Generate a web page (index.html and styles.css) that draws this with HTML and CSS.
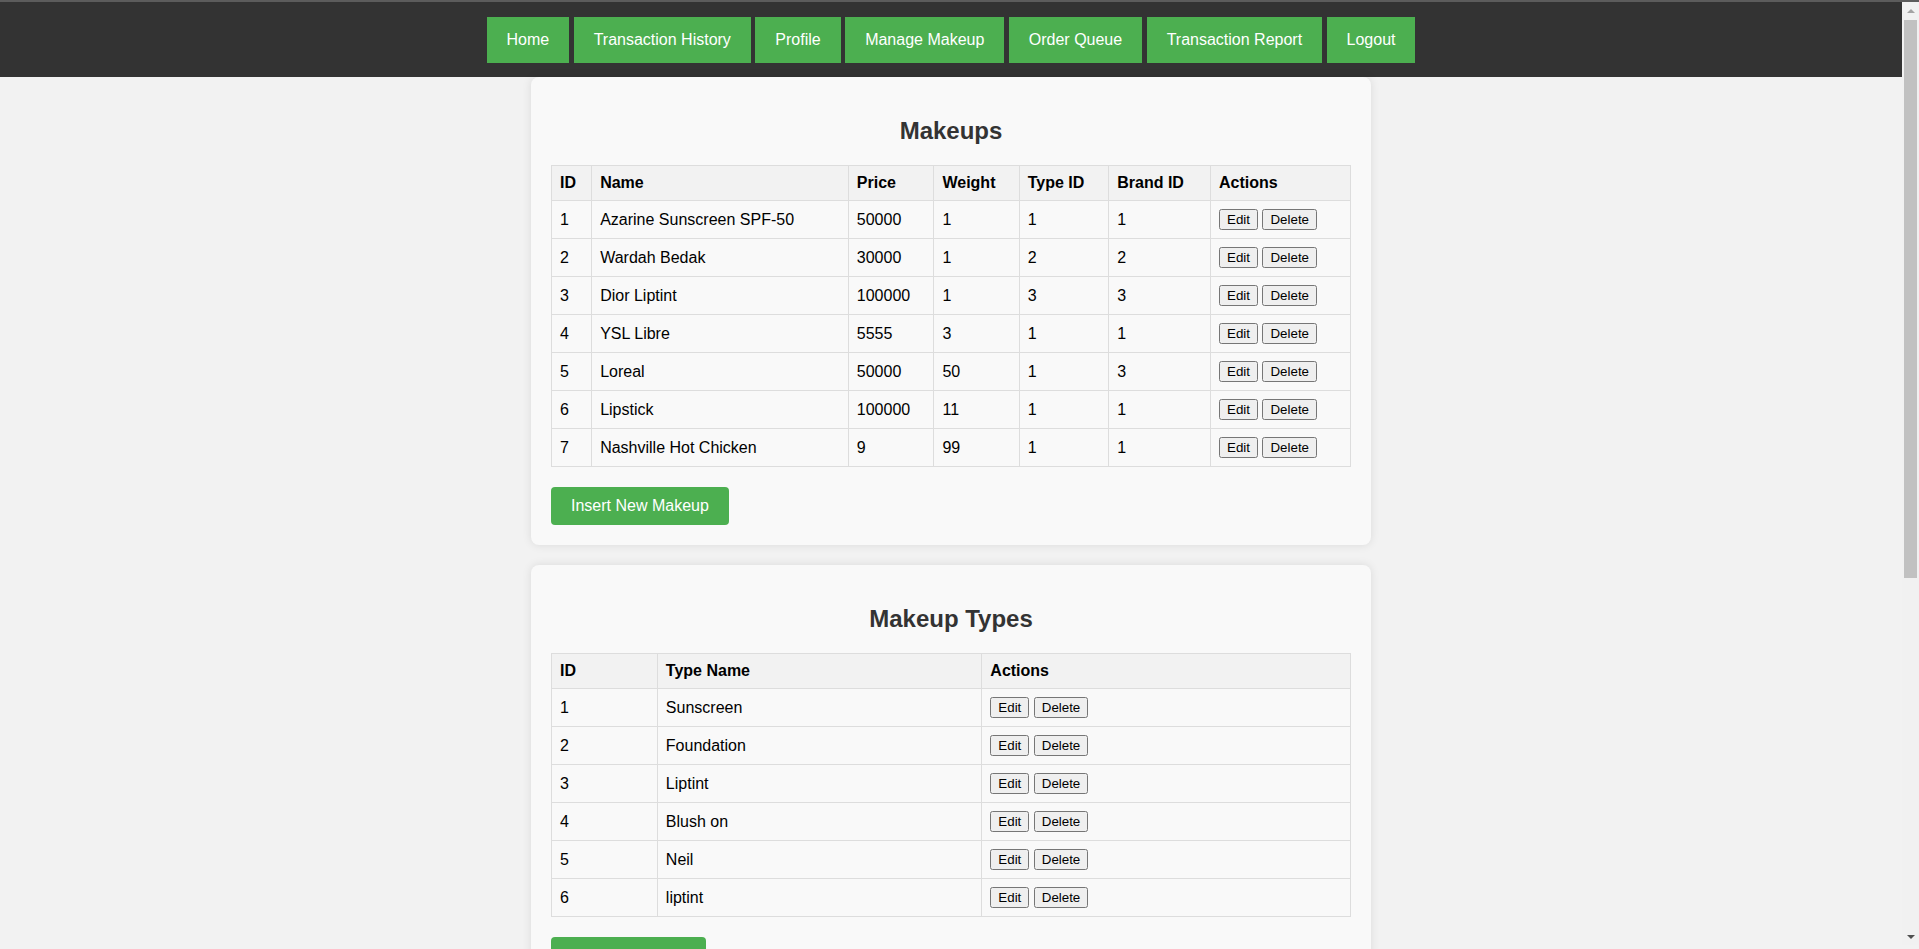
FILE: index.html
```html
<!DOCTYPE html>
<html lang="en">
<head>
<meta charset="UTF-8">
<title>Manage Makeup</title>
<link rel="stylesheet" href="styles.css">
</head>
<body>
<div class="page">
  <nav class="navbar">
    <a href="#" class="nav-link">Home</a>
    <a href="#" class="nav-link">Transaction History</a>
    <a href="#" class="nav-link">Profile</a>
    <a href="#" class="nav-link">Manage Makeup</a>
    <a href="#" class="nav-link">Order Queue</a>
    <a href="#" class="nav-link">Transaction Report</a>
    <a href="#" class="nav-link">Logout</a>
  </nav>

  <main class="content">
    <section class="card">
      <h2 class="card-title">Makeups</h2>
      <table class="data-table">
        <thead>
          <tr><th>ID</th><th>Name</th><th>Price</th><th>Weight</th><th>Type ID</th><th>Brand ID</th><th>Actions</th></tr>
        </thead>
        <tbody>
          <tr><td>1</td><td>Azarine Sunscreen SPF-50</td><td>50000</td><td>1</td><td>1</td><td>1</td><td><button class="btn-sm">Edit</button> <button class="btn-sm">Delete</button></td></tr>
          <tr><td>2</td><td>Wardah Bedak</td><td>30000</td><td>1</td><td>2</td><td>2</td><td><button class="btn-sm">Edit</button> <button class="btn-sm">Delete</button></td></tr>
          <tr><td>3</td><td>Dior Liptint</td><td>100000</td><td>1</td><td>3</td><td>3</td><td><button class="btn-sm">Edit</button> <button class="btn-sm">Delete</button></td></tr>
          <tr><td>4</td><td>YSL Libre</td><td>5555</td><td>3</td><td>1</td><td>1</td><td><button class="btn-sm">Edit</button> <button class="btn-sm">Delete</button></td></tr>
          <tr><td>5</td><td>Loreal</td><td>50000</td><td>50</td><td>1</td><td>3</td><td><button class="btn-sm">Edit</button> <button class="btn-sm">Delete</button></td></tr>
          <tr><td>6</td><td>Lipstick</td><td>100000</td><td>11</td><td>1</td><td>1</td><td><button class="btn-sm">Edit</button> <button class="btn-sm">Delete</button></td></tr>
          <tr><td>7</td><td>Nashville Hot Chicken</td><td>9</td><td>99</td><td>1</td><td>1</td><td><button class="btn-sm">Edit</button> <button class="btn-sm">Delete</button></td></tr>
        </tbody>
      </table>
      <a href="#" class="btn-insert">Insert New Makeup</a>
    </section>

    <section class="card">
      <h2 class="card-title">Makeup Types</h2>
      <table class="data-table">
        <thead>
          <tr><th>ID</th><th>Type Name</th><th>Actions</th></tr>
        </thead>
        <tbody>
          <tr><td>1</td><td>Sunscreen</td><td><button class="btn-sm">Edit</button> <button class="btn-sm">Delete</button></td></tr>
          <tr><td>2</td><td>Foundation</td><td><button class="btn-sm">Edit</button> <button class="btn-sm">Delete</button></td></tr>
          <tr><td>3</td><td>Liptint</td><td><button class="btn-sm">Edit</button> <button class="btn-sm">Delete</button></td></tr>
          <tr><td>4</td><td>Blush on</td><td><button class="btn-sm">Edit</button> <button class="btn-sm">Delete</button></td></tr>
          <tr><td>5</td><td>Neil</td><td><button class="btn-sm">Edit</button> <button class="btn-sm">Delete</button></td></tr>
          <tr><td>6</td><td>liptint</td><td><button class="btn-sm">Edit</button> <button class="btn-sm">Delete</button></td></tr>
        </tbody>
      </table>
      <a href="#" class="btn-insert">Insert New Type</a>
    </section>
  </main>
</div>
<div class="scrollbar" aria-hidden="true">
  <div class="sb-button"><span class="sb-arrow-up"></span></div>
  <div class="sb-thumb"></div>
  <div class="sb-spacer"></div>
  <div class="sb-button"><span class="sb-arrow-down"></span></div>
</div>
</body>
</html>
```

FILE: styles.css
```css
html {
  margin: 0;
  padding: 0;
}

body {
  margin: 0;
  padding: 0;
  display: flex;
  align-items: flex-start;
  border-top: 2px solid #5c5c5c;
  font-family: Arial, "Liberation Sans", sans-serif;
  background-color: #f2f2f2;
  color: #000;
}

.page {
  flex: 1;
  min-width: 0;
}

/* browser scrollbar column as seen in the screenshot */
.scrollbar {
  flex: 0 0 17px;
  width: 17px;
  height: calc(100vh - 6px);
  background-color: #f1f1f1;
  display: flex;
  flex-direction: column;
  align-items: center;
}

.sb-button {
  height: 17px;
  width: 17px;
  display: flex;
  align-items: center;
  justify-content: center;
}

.sb-arrow-up {
  width: 0;
  height: 0;
  border-left: 4px solid transparent;
  border-right: 4px solid transparent;
  border-bottom: 4px solid #a3a3a3;
}

.sb-arrow-down {
  width: 0;
  height: 0;
  border-left: 4px solid transparent;
  border-right: 4px solid transparent;
  border-top: 4px solid #505050;
}

.sb-thumb {
  width: 13px;
  height: 558px;
  margin-top: 1px;
  background-color: #c1c1c1;
}

.sb-spacer {
  flex: 1;
}

.navbar {
  background-color: #333;
  padding: 15px 0 14px;
  text-align: center;
}

.nav-link {
  display: inline-block;
  background-color: #4caf50;
  color: #fff;
  text-decoration: none;
  font-size: 16px;
  padding: 14px 20px;
}

.card {
  max-width: 800px;
  margin: 0 auto 20px;
  padding: 20px;
  background-color: #f9f9f9;
  border-radius: 8px;
  box-shadow: 0 0 10px rgba(0, 0, 0, 0.1);
}

.card-title {
  text-align: center;
  color: #333;
  font-size: 24px;
  margin: 20px 0;
}

.data-table {
  width: 100%;
  border-collapse: collapse;
  margin-bottom: 20px;
}

.data-table th,
.data-table td {
  border: 1px solid #ddd;
  padding: 8px;
  text-align: left;
  font-size: 16px;
}

.data-table th {
  background-color: #f2f2f2;
}

.btn-sm {
  font-family: Arial, "Liberation Sans", sans-serif;
  font-size: 13.333px;
}

.btn-insert {
  display: inline-block;
  background-color: #4caf50;
  color: #fff;
  text-decoration: none;
  font-size: 16px;
  padding: 10px 20px;
  border-radius: 4px;
}
```
